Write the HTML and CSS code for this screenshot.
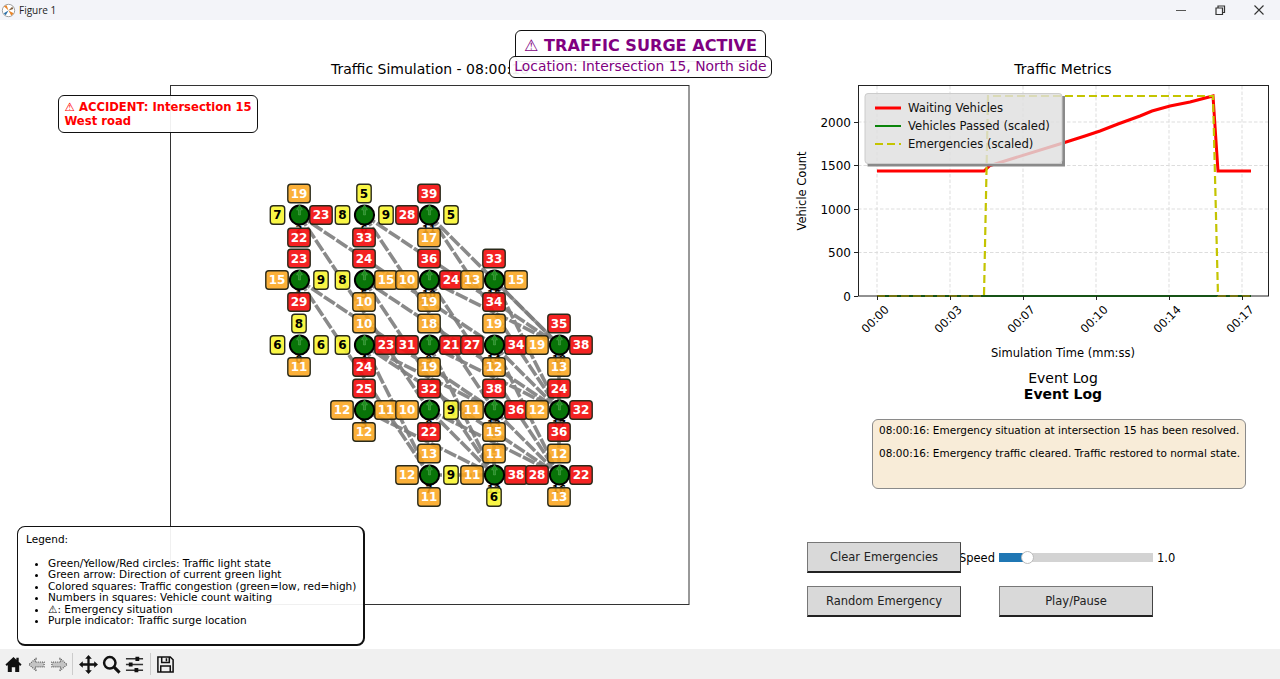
FILE: index.html
```html
<!DOCTYPE html>
<html lang="en">
<head>
<meta charset="utf-8">
<title>Figure 1</title>
<link rel="stylesheet" href="styles.css">
</head>
<body>
<div class="window">
  <header class="titlebar">
    <div class="titlebar-left">
      <svg class="app-icon" viewBox="0 0 16 16"><circle cx="8" cy="8" r="6.6" fill="#fff" stroke="#9a9a9a"/><path d="M8 8 3 3.5 6 2.5Z" fill="#e8852b"/><path d="M8 8 13.5 11 11 13.5Z" fill="#e8852b"/><path d="M8 8 5 13 3 11Z" fill="#2a6fa8"/><path d="M8 8 12 4 13 6.5Z" fill="#7a5a3a"/></svg>
      <span class="app-title">Figure 1</span>
    </div>
    <div class="window-controls">
      <svg class="win-icon" viewBox="0 0 12 12"><path d="M1 6.5H11" stroke="#555"/></svg>
      <svg class="win-icon" viewBox="0 0 12 12"><path d="M2 4H8.5V10.5H2Z M4 4V2H10.5V8.5H8.5" fill="none" stroke="#333" stroke-width="1.2"/></svg>
      <svg class="win-icon" viewBox="0 0 12 12"><path d="M1.5 1.5 10.5 10.5M10.5 1.5 1.5 10.5" stroke="#333" stroke-width="1.1"/></svg>
    </div>
  </header>

  <main class="figure">
    <section class="sim">
      <h2 class="sim-title">Traffic Simulation - 08:00:16</h2>
      <svg class="sim-axes" viewBox="170 85 520 520">
        <rect class="frame" x="170.5" y="85.5" width="518.5" height="519"/>
        <g class="roads">
          <path d="M299 215 494 345M299 215 429 410M364 215 559 345M364 215 494 410M429 215 559 345M429 215 559 410"/>
          <path d="M299 280 494 410M299 280 429 475M364 280 559 410M364 280 494 475M429 280 559 345M429 280 559 475M494 280 559 345M494 280 559 410"/>
          <path d="M364 345 494 410M364 345 429 475M364 345 559 475M429 345 559 410M429 345 494 475M494 345 559 410M494 345 559 475"/>
          <path d="M364 410 494 475M429 410 494 475M429 410 559 475M494 410 559 475M429 475 494 475M494 410 494 475M559 345 559 475"/>
        </g>
        <g class="ids">
          <text x="299" y="229.5">2</text><text x="364" y="229.5">6</text><text x="429" y="229.5">11</text>
          <text x="299" y="294.5">1</text><text x="364" y="294.5">5</text><text x="429" y="294.5">10</text><text x="494" y="294.5">15</text>
          <text x="299" y="359.5">0</text><text x="364" y="359.5">4</text><text x="429" y="359.5">9</text><text x="494" y="359.5">14</text><text x="559" y="359.5">18</text>
          <text x="364" y="424.5">3</text><text x="429" y="424.5">8</text><text x="494" y="424.5">13</text><text x="559" y="424.5">17</text>
          <text x="429" y="489.5">7</text><text x="494" y="489.5">12</text><text x="559" y="489.5">16</text>
        </g>
        <g class="squares">
          <g class="o2" transform="translate(299 193.5)"><rect/><text>19</text></g>
          <g class="y1" transform="translate(277.5 215)"><rect/><text>7</text></g>
          <g class="r2" transform="translate(321 215)"><rect/><text>23</text></g>
          <g class="r2" transform="translate(299 237.5)"><rect/><text>22</text></g>
          <g class="y1" transform="translate(364 193.5)"><rect/><text>5</text></g>
          <g class="y1" transform="translate(342.5 215)"><rect/><text>8</text></g>
          <g class="y1" transform="translate(386 215)"><rect/><text>9</text></g>
          <g class="r2" transform="translate(364 237.5)"><rect/><text>33</text></g>
          <g class="r2" transform="translate(429 193.5)"><rect/><text>39</text></g>
          <g class="r2" transform="translate(407 215)"><rect/><text>28</text></g>
          <g class="y1" transform="translate(451 215)"><rect/><text>5</text></g>
          <g class="o2" transform="translate(429 237.5)"><rect/><text>17</text></g>

          <g class="r2" transform="translate(299 258.5)"><rect/><text>23</text></g>
          <g class="o2" transform="translate(277 280)"><rect/><text>15</text></g>
          <g class="y1" transform="translate(321 280)"><rect/><text>9</text></g>
          <g class="r2" transform="translate(299 302)"><rect/><text>29</text></g>
          <g class="r2" transform="translate(364 258.5)"><rect/><text>24</text></g>
          <g class="y1" transform="translate(342.5 280)"><rect/><text>8</text></g>
          <g class="o2" transform="translate(386 280)"><rect/><text>15</text></g>
          <g class="o2" transform="translate(364 302)"><rect/><text>10</text></g>
          <g class="r2" transform="translate(429 258.5)"><rect/><text>36</text></g>
          <g class="o2" transform="translate(407 280)"><rect/><text>10</text></g>
          <g class="r2" transform="translate(451 280)"><rect/><text>24</text></g>
          <g class="o2" transform="translate(429 302)"><rect/><text>19</text></g>
          <g class="r2" transform="translate(494 258.5)"><rect/><text>33</text></g>
          <g class="o2" transform="translate(472 280)"><rect/><text>13</text></g>
          <g class="o2" transform="translate(516 280)"><rect/><text>15</text></g>
          <g class="r2" transform="translate(494 302)"><rect/><text>34</text></g>

          <g class="y1" transform="translate(299 323.5)"><rect/><text>8</text></g>
          <g class="y1" transform="translate(277.5 345)"><rect/><text>6</text></g>
          <g class="y1" transform="translate(321 345)"><rect/><text>6</text></g>
          <g class="o2" transform="translate(299 367)"><rect/><text>11</text></g>
          <g class="o2" transform="translate(364 323.5)"><rect/><text>10</text></g>
          <g class="y1" transform="translate(342.5 345)"><rect/><text>6</text></g>
          <g class="r2" transform="translate(386 345)"><rect/><text>23</text></g>
          <g class="r2" transform="translate(364 367)"><rect/><text>24</text></g>
          <g class="o2" transform="translate(429 323.5)"><rect/><text>18</text></g>
          <g class="r2" transform="translate(407 345)"><rect/><text>31</text></g>
          <g class="r2" transform="translate(451 345)"><rect/><text>21</text></g>
          <g class="o2" transform="translate(429 367)"><rect/><text>19</text></g>
          <g class="o2" transform="translate(494 323.5)"><rect/><text>19</text></g>
          <g class="r2" transform="translate(472 345)"><rect/><text>27</text></g>
          <g class="r2" transform="translate(516 345)"><rect/><text>34</text></g>
          <g class="o2" transform="translate(494 367)"><rect/><text>12</text></g>
          <g class="r2" transform="translate(559 323.5)"><rect/><text>35</text></g>
          <g class="o2" transform="translate(537 345)"><rect/><text>19</text></g>
          <g class="r2" transform="translate(581 345)"><rect/><text>38</text></g>
          <g class="o2" transform="translate(559 367)"><rect/><text>13</text></g>

          <g class="r2" transform="translate(364 388.5)"><rect/><text>25</text></g>
          <g class="o2" transform="translate(342 410)"><rect/><text>12</text></g>
          <g class="o2" transform="translate(386 410)"><rect/><text>11</text></g>
          <g class="o2" transform="translate(364 432)"><rect/><text>12</text></g>
          <g class="r2" transform="translate(429 388.5)"><rect/><text>32</text></g>
          <g class="o2" transform="translate(407 410)"><rect/><text>10</text></g>
          <g class="y1" transform="translate(451 410)"><rect/><text>9</text></g>
          <g class="r2" transform="translate(429 432)"><rect/><text>22</text></g>
          <g class="r2" transform="translate(494 388.5)"><rect/><text>38</text></g>
          <g class="o2" transform="translate(472 410)"><rect/><text>11</text></g>
          <g class="r2" transform="translate(516 410)"><rect/><text>36</text></g>
          <g class="o2" transform="translate(494 432)"><rect/><text>15</text></g>
          <g class="r2" transform="translate(559 388.5)"><rect/><text>24</text></g>
          <g class="o2" transform="translate(537 410)"><rect/><text>12</text></g>
          <g class="r2" transform="translate(581 410)"><rect/><text>32</text></g>
          <g class="r2" transform="translate(559 432)"><rect/><text>36</text></g>

          <g class="o2" transform="translate(429 453.5)"><rect/><text>13</text></g>
          <g class="o2" transform="translate(407 475)"><rect/><text>12</text></g>
          <g class="y1" transform="translate(451 475)"><rect/><text>9</text></g>
          <g class="o2" transform="translate(429 497)"><rect/><text>11</text></g>
          <g class="o2" transform="translate(494 453.5)"><rect/><text>11</text></g>
          <g class="o2" transform="translate(472 475)"><rect/><text>11</text></g>
          <g class="r2" transform="translate(516 475)"><rect/><text>38</text></g>
          <g class="y1" transform="translate(494 497)"><rect/><text>6</text></g>
          <g class="o2" transform="translate(559 453.5)"><rect/><text>12</text></g>
          <g class="r2" transform="translate(537 475)"><rect/><text>28</text></g>
          <g class="r2" transform="translate(581 475)"><rect/><text>22</text></g>
          <g class="o2" transform="translate(559 497)"><rect/><text>13</text></g>
        </g>
        <g class="lights">
          <circle cx="299.5" cy="215" r="9.6"/><circle cx="364.5" cy="215" r="9.6"/><circle cx="429.5" cy="215" r="9.6"/>
          <circle cx="299.5" cy="280" r="9.6"/><circle cx="364.5" cy="280" r="9.6"/><circle cx="429.5" cy="280" r="9.6"/><circle cx="494.5" cy="280" r="9.6"/>
          <circle cx="299.5" cy="345" r="9.6"/><circle cx="364.5" cy="345" r="9.6"/><circle cx="429.5" cy="345" r="9.6"/><circle cx="494.5" cy="345" r="9.6"/><circle cx="559.5" cy="345" r="9.6"/>
          <circle cx="364.5" cy="410" r="9.6"/><circle cx="429.5" cy="410" r="9.6"/><circle cx="494.5" cy="410" r="9.6"/><circle cx="559.5" cy="410" r="9.6"/>
          <circle cx="429.5" cy="475" r="9.6"/><circle cx="494.5" cy="475" r="9.6"/><circle cx="559.5" cy="475" r="9.6"/>
        </g>
        <g class="arrows">
          <path d="M298.5 215V210H296.5L299.5 204.5 302.5 210H300.5V215Z"/><path d="M363.5 215V210H361.5L364.5 204.5 367.5 210H365.5V215Z"/><path d="M428.5 215V210H426.5L429.5 204.5 432.5 210H430.5V215Z"/>
          <path d="M298.5 280V275H296.5L299.5 269.5 302.5 275H300.5V280Z"/><path d="M363.5 280V275H361.5L364.5 269.5 367.5 275H365.5V280Z"/><path d="M428.5 280V275H426.5L429.5 269.5 432.5 275H430.5V280Z"/><path d="M493.5 280V275H491.5L494.5 269.5 497.5 275H495.5V280Z"/>
          <path d="M298.5 345V340H296.5L299.5 334.5 302.5 340H300.5V345Z"/><path d="M363.5 345V340H361.5L364.5 334.5 367.5 340H365.5V345Z"/><path d="M428.5 345V340H426.5L429.5 334.5 432.5 340H430.5V345Z"/><path d="M493.5 345V340H491.5L494.5 334.5 497.5 340H495.5V345Z"/><path d="M558.5 345V340H556.5L559.5 334.5 562.5 340H560.5V345Z"/>
          <path d="M363.5 410V405H361.5L364.5 399.5 367.5 405H365.5V410Z"/><path d="M428.5 410V405H426.5L429.5 399.5 432.5 405H430.5V410Z"/><path d="M493.5 410V405H491.5L494.5 399.5 497.5 405H495.5V410Z"/><path d="M558.5 410V405H556.5L559.5 399.5 562.5 405H560.5V410Z"/>
          <path d="M428.5 475V470H426.5L429.5 464.5 432.5 470H430.5V475Z"/><path d="M493.5 475V470H491.5L494.5 464.5 497.5 470H495.5V475Z"/><path d="M558.5 475V470H556.5L559.5 464.5 562.5 470H560.5V475Z"/>
        </g>
      </svg>
    </section>

    <section class="side">
      <svg class="chart" viewBox="790 60 490 310">
        <text class="chart-title" x="1063" y="74">Traffic Metrics</text>
        <path class="gridline" d="M877 86V296M950 86V296M1023 86V296M1096 86V296M1169 86V296M1242 86V296M858 252.5H1268M858 209H1268M858 165.5H1268M858 122H1268"/>
        <polyline class="line-green" points="877,296 1251,296"/>
        <polyline class="line-red" points="877,171 984,171 990,165.5 1063,143 1085,136 1100,131 1118,124 1140,116 1152,111 1170,106 1190,102 1213,96 1218,171 1251,171"/>
        <polyline class="line-yellow" points="877,296 984,296 988,96 1213,96 1218,296 1251,296"/>
        <rect class="chart-frame" x="858.5" y="85.5" width="410" height="210.5"/>
        <path class="ticks" d="M854 296.5H858M854 252.5H858M854 209.5H858M854 165.5H858M854 122.5H858M877.5 296V300M950.5 296V300M1023.5 296V300M1096.5 296V300M1169.5 296V300M1242.5 296V300"/>
        <g class="ytick">
          <text x="851" y="300.5">0</text><text x="851" y="257">500</text><text x="851" y="213.5">1000</text><text x="851" y="170">1500</text><text x="851" y="126.5">2000</text>
        </g>
        <g class="xtick">
          <text transform="translate(878 322) rotate(-45)">00:00</text>
          <text transform="translate(951 322) rotate(-45)">00:03</text>
          <text transform="translate(1024 322) rotate(-45)">00:07</text>
          <text transform="translate(1097 322) rotate(-45)">00:10</text>
          <text transform="translate(1170 322) rotate(-45)">00:14</text>
          <text transform="translate(1243 322) rotate(-45)">00:17</text>
        </g>
        <text class="axis-label" x="1063" y="357">Simulation Time (mm:ss)</text>
        <text class="axis-label" transform="translate(806 191) rotate(-90)">Vehicle Count</text>
        <path class="legend-shadow" d="M1062 96H1065V166.5H867.5V163.5H1062Z"/>
        <rect class="legend-box" x="865" y="93.5" width="197" height="70" rx="3"/>
        <path class="key-red" d="M875 108H901"/>
        <path class="key-green" d="M875 126H901"/>
        <path class="key-yellow" d="M875 144H901"/>
        <text class="legend-text" x="908" y="112">Waiting Vehicles</text>
        <text class="legend-text" x="908" y="130">Vehicles Passed (scaled)</text>
        <text class="legend-text" x="908" y="148">Emergencies (scaled)</text>
      </svg>
      <h2 class="log-heading">Event Log</h2>
      <h2 class="log-heading log-heading-bold">Event Log</h2>
      <div class="log-box">
        <p>08:00:16: Emergency situation at intersection 15 has been resolved.</p>
        <p>08:00:16: Emergency traffic cleared. Traffic restored to normal state.</p>
      </div>
      <div class="controls">
        <button class="btn">Clear Emergencies</button>
        <div class="slider">
          <span class="slider-label">Speed</span>
          <div class="track"><div class="track-fill"></div><div class="knob"></div></div>
          <span class="slider-value">1.0</span>
        </div>
        <button class="btn">Random Emergency</button>
        <button class="btn">Play/Pause</button>
      </div>
    </section>

    <div class="callout surge"><span>⚠ TRAFFIC SURGE ACTIVE</span></div>
    <div class="callout location"><span>Location: Intersection 15, North side</span></div>
    <div class="callout accident"><span>⚠ ACCIDENT: Intersection 15</span><span>West road</span></div>
    <div class="callout legend">
      <p class="legend-head">Legend:</p>
      <ul class="legend-list">
        <li>Green/Yellow/Red circles: Traffic light state</li>
        <li>Green arrow: Direction of current green light</li>
        <li>Colored squares: Traffic congestion (green=low, red=high)</li>
        <li>Numbers in squares: Vehicle count waiting</li>
        <li>⚠: Emergency situation</li>
        <li>Purple indicator: Traffic surge location</li>
      </ul>
    </div>
  </main>

  <footer class="toolbar">
    <svg class="tool" viewBox="0 0 20 20"><path d="M10 2 1.5 10 3 11.5 4 10.6V18H8.2V13H11.8V18H16V10.6L17 11.5 18.5 10 15.5 7.2V3H13V4.9Z" fill="#111"/></svg>
    <svg class="tool" viewBox="0 0 20 20"><path class="dotted" d="M10 3 2 10 10 17 8.5 12.5H18V7.5H8.5Z"/></svg>
    <svg class="tool" viewBox="0 0 20 20"><path class="dotted" d="M10 3 18 10 10 17 11.5 12.5H2V7.5H11.5Z"/></svg>
    <span class="tool-sep"></span>
    <svg class="tool" viewBox="0 0 20 20"><path d="M10 0 13.5 4H11.2V8.8H16V6.5L20 10 16 13.5V11.2H11.2V16H13.5L10 20 6.5 16H8.8V11.2H4V13.5L0 10 4 6.5V8.8H8.8V4H6.5Z" fill="#111"/></svg>
    <svg class="tool" viewBox="0 0 20 20"><circle cx="8.2" cy="8.2" r="6" fill="none" stroke="#111" stroke-width="2.6"/><path d="M12.5 12.5 18.5 18.5" stroke="#111" stroke-width="3.2"/></svg>
    <svg class="tool" viewBox="0 0 20 20"><path d="M1 4H19M1 10H19M1 16H19" stroke="#333" stroke-width="1.6"/><path d="M11 1.8H15V6.2H11ZM4 7.8H8V12.2H4ZM10 13.8H14V18.2H10Z" fill="#111"/></svg>
    <span class="tool-sep tool-sep-last"></span>
    <svg class="tool" viewBox="0 0 20 20"><path d="M2 2H15L18 5V18H2Z M6 2V8H14V2M5 18V11.5H15V18M11 3.5V6.5" fill="none" stroke="#111" stroke-width="1.6"/></svg>
  </footer>
</div>
</body>
</html>
```

FILE: styles.css
```css
* { box-sizing: border-box; }
html, body { margin: 0; padding: 0; height: 100%; background: #fff; overflow: hidden; }
body { font-family: "DejaVu Sans", sans-serif; color: #000; }

.window { display: flex; flex-direction: column; height: 679px; }

.titlebar { display: flex; justify-content: space-between; align-items: center; height: 20px; background: #f3f4f9; flex: none; }
.titlebar-left { display: flex; align-items: center; gap: 3px; padding-left: 1px; }
.app-icon { width: 15px; height: 15px; }
.app-title { font: 10px "Open Sans", sans-serif; color: #222; }
.window-controls { display: flex; gap: 27px; padding-right: 15px; }
.win-icon { width: 12px; height: 12px; }

.figure { position: relative; flex: 1; display: flex; background: #fff; min-height: 0; }

.sim { width: 790px; flex: none; padding: 40px 0 0 170px; }
.sim-title { width: 520px; height: 18px; margin: 0 0 7px; font-size: 14px; line-height: 18px; font-weight: 400; text-align: center; }
.sim-axes { display: block; width: 520px; height: 520px; }
.frame { fill: #fff; stroke: #333; stroke-width: 1; }

.roads path { fill: none; stroke: #7d7d7d; stroke-width: 3.6; stroke-dasharray: 13 2; opacity: .9; }

.ids text { font-size: 10px; font-weight: 700; text-anchor: middle; dominant-baseline: central; fill: #000; }

.squares rect { y: -9.3px; height: 18.6px; rx: 3px; stroke: #2a2a1a; stroke-width: 1.4; }
.squares text { font-size: 12px; font-weight: 700; text-anchor: middle; dominant-baseline: central; }
.r2 rect { x: -11.2px; width: 22.4px; fill: rgba(243, 16, 16, .92); }
.o2 rect { x: -11.2px; width: 22.4px; fill: rgba(250, 165, 30, .88); }
.y1 rect { x: -7.2px; width: 14.4px; fill: rgba(248, 245, 50, .9); }
.r2 text, .o2 text { fill: #fff; }
.y1 text { fill: #000; }

.lights circle { fill: #087408; stroke: #000; stroke-width: 2; }
.arrows path { fill: #1f8f1f; stroke: rgba(235, 250, 235, .4); stroke-width: .4; }

.side { flex: 1; min-width: 0; }
.chart { display: block; width: 490px; height: 310px; margin-top: 40px; }
.chart-title { font-size: 14px; text-anchor: middle; }
.gridline { stroke: #ddd; stroke-width: 1; stroke-dasharray: 3.5 2; fill: none; }
.chart-frame { fill: none; stroke: #222; stroke-width: 1; }
.ticks { stroke: #222; stroke-width: 1; fill: none; }
.ytick text { font-size: 12px; text-anchor: end; }
.xtick text { font-size: 11.5px; text-anchor: middle; }
.axis-label { font-size: 11.5px; text-anchor: middle; }
.line-green { fill: none; stroke: #0a840a; stroke-width: 2; }
.line-red { fill: none; stroke: #f00; stroke-width: 3; }
.line-yellow { fill: none; stroke: #c4c400; stroke-width: 2.2; stroke-dasharray: 8 4; }
.legend-shadow { fill: #8a8a8a; }
.legend-box { fill: rgba(223, 223, 223, .82); stroke: #ccc; stroke-width: 1; }
.key-red { stroke: #f00; stroke-width: 3; }
.key-green { stroke: #0a840a; stroke-width: 2; }
.key-yellow { stroke: #c4c400; stroke-width: 2.2; stroke-dasharray: 8 4; }
.legend-text { font-size: 11.65px; fill: #111; }

.log-heading { margin: 0; height: 16px; width: 546px; text-align: center; font-size: 14px; line-height: 16px; font-weight: 400; }
.log-heading-bold { font-weight: 700; }

.log-box { width: 374px; height: 70px; margin: 17px 0 0 82px; padding: 4px 6px; background: #f8ecd8; border: 1px solid #8a8a8a; border-radius: 6px; }
.log-box p { margin: 0 0 11px; font-size: 10.48px; line-height: 12px; white-space: nowrap; }

.controls { display: grid; grid-template-columns: 154px 154px; grid-template-rows: 31px 31px; column-gap: 38px; row-gap: 13px; margin: 53px 0 0 17px; }
.btn { position: relative; z-index: 1; padding: 0; font: 11.5px "DejaVu Sans", sans-serif; color: #222; background: #d9d9d9; border: 1px solid #777; border-right-color: #444; border-bottom: 2px solid #222; border-radius: 0; }
.slider { position: relative; display: flex; align-items: center; }
.slider-label { position: absolute; right: calc(100% + 4px); font-size: 11.5px; }
.slider-value { position: absolute; left: calc(100% + 4px); font-size: 11.5px; }
.track { position: relative; width: 100%; height: 9px; background: #d3d3d3; }
.track-fill { width: 28px; height: 100%; background: #1f77b4; }
.knob { position: absolute; left: 22px; top: -2px; width: 13px; height: 13px; background: #fff; border: 1px solid #bbb; border-radius: 50%; }

.callout { position: absolute; background: rgba(255, 255, 255, .93); border: 1.5px solid #111; border-radius: 6px; }
.surge { left: 515px; top: 10px; width: 251px; height: 32px; padding-top: 5px; text-align: center; font-size: 16.1px; font-weight: 700; color: #800080; white-space: nowrap; }
.location { left: 509px; top: 36px; width: 263px; height: 22px; text-align: center; font-size: 13.85px; line-height: 19px; color: #800080; white-space: nowrap; }
.accident { left: 58px; top: 75px; width: 200px; height: 38px; padding: 3.5px 5.5px; display: flex; flex-direction: column; font-size: 11.6px; line-height: 14px; font-weight: 700; color: #f00; white-space: nowrap; }
.legend { left: 17px; top: 506px; width: 348px; height: 120px; padding: 6px 8px; font-size: 10.5px; border-radius: 8px; border-right-width: 2px; border-bottom-width: 2px; }
.legend-head { margin: 0 0 12.5px; line-height: 12px; }
.legend-list { margin: 0; padding: 0 0 0 22px; line-height: 11.6px; white-space: nowrap; }

.toolbar { display: flex; align-items: center; gap: 4px; height: 30px; padding-left: 4px; background: #f0f0f0; flex: none; }
.tool { width: 19px; height: 19px; }
.tool-sep { width: 1px; height: 22px; background: #ccc; margin: 0 2px 0 -1px; }
.tool-sep-last { margin: 0 1px 0 2px; }
.dotted { fill: #c4c4c4; stroke: #555; stroke-width: 1.2; stroke-dasharray: 1 1.2; }
```
